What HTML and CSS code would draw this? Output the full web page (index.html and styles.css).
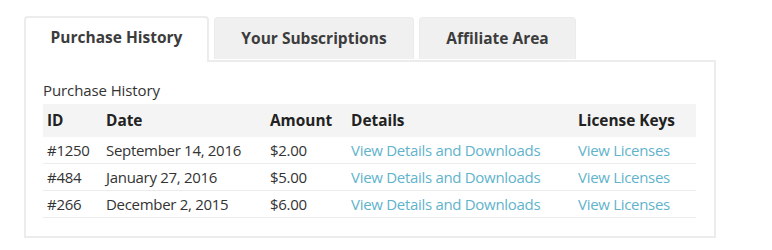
FILE: index.html
```html
<!DOCTYPE html>
<html>
<head>
<meta charset="utf-8">
<link rel="stylesheet" href="styles.css">
</head>
<body>
<div class="wrap">
  <div class="tabs">
    <div class="tab tab-active tab-1">Purchase History</div>
    <div class="tab tab-2">Your Subscriptions</div>
    <div class="tab tab-3">Affiliate Area</div>
  </div>
  <div class="panel">
    <div class="caption">Purchase History</div>
    <table class="history">
      <colgroup>
        <col class="c-id"><col class="c-date"><col class="c-amt"><col class="c-det"><col class="c-lic">
      </colgroup>
      <thead>
        <tr><th>ID</th><th>Date</th><th>Amount</th><th>Details</th><th>License Keys</th></tr>
      </thead>
      <tbody>
        <tr><td>#1250</td><td>September 14, 2016</td><td>$2.00</td><td><a href="#">View Details and Downloads</a></td><td><a href="#">View Licenses</a></td></tr>
        <tr><td>#484</td><td>January 27, 2016</td><td>$5.00</td><td><a href="#">View Details and Downloads</a></td><td><a href="#">View Licenses</a></td></tr>
        <tr><td>#266</td><td>December 2, 2015</td><td>$6.00</td><td><a href="#">View Details and Downloads</a></td><td><a href="#">View Licenses</a></td></tr>
      </tbody>
    </table>
  </div>
</div>
</body>
</html>
```
FILE: styles.css
```css
html, body { margin: 0; padding: 0; background: #fff; }
body { font-family: "Open Sans", "Noto Sans", sans-serif; color: #333; }
.wrap { padding: 16px 0 0 24px; width: 692px; }
.tabs { display: flex; gap: 5px; height: 44px; position: relative; z-index: 1; }
.tab {
  box-sizing: border-box;
  height: 42px;
  background: #f0f0f0;
  border: 1px solid #ebebeb;
  border-bottom: none;
  border-radius: 4px 4px 0 0;
  font-weight: 700;
  font-size: 15.5px;
  color: #3c3c3c;
  display: flex;
  align-items: center;
  justify-content: center;
  padding-bottom: 2px;
}
.tab-active { background: #fff; height: 46px; border: 2px solid #ececec; border-bottom: none; padding-bottom: 6px; }
.tab-1 { width: 185px; }
.tab-2 { width: 200px; margin-top: 1px; }
.tab-3 { width: 157px; margin-top: 1px; }
.panel {
  box-sizing: border-box;
  border: 2px solid #ececec;
  height: 178px;
  padding: 18px 17px 0 17px;
}
.caption { font-size: 15px; color: #333; line-height: 20px; margin-bottom: 4px; letter-spacing: -0.1px; }
.history { border-collapse: collapse; width: 653px; table-layout: fixed; font-size: 15px; }
.c-id { width: 59px; }
.c-date { width: 164px; }
.c-amt { width: 81px; }
.c-det { width: 227px; }
.c-lic { width: 122px; }
.history th { background: #f4f4f4; text-align: left; font-weight: 700; font-size: 15.4px; color: #222; height: 33px; padding: 0 4px; }
.history td { height: 26px; padding: 0 4px; border-bottom: 1px solid #ececec; white-space: nowrap; letter-spacing: -0.3px; }
.history a { color: #5fb3cc; text-decoration: none; }
```
